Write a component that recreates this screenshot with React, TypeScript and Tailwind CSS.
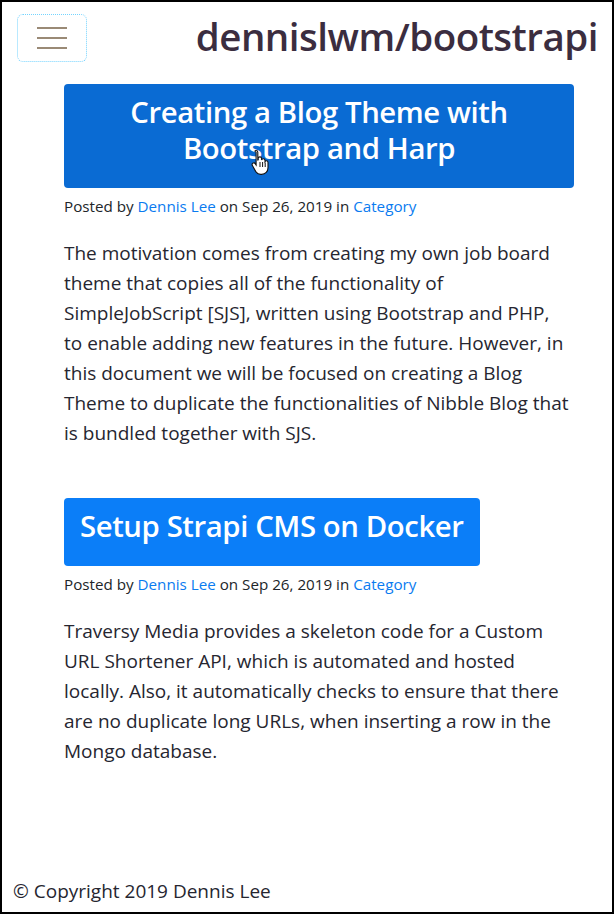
const FONT = "font-['Open_Sans','Noto_Sans',sans-serif]";

function Hamburger() {
  return (
    <button
      type="button"
      className="flex h-[48px] w-[70px] flex-col items-center justify-center gap-[8px] rounded-[6px] border border-dotted border-sky-300 bg-white"
    >
      <span className="h-[2px] w-[30px] bg-[#9a8a76]" />
      <span className="h-[2px] w-[30px] bg-[#9a8a76]" />
      <span className="h-[2px] w-[30px] bg-[#9a8a76]" />
    </button>
  );
}

function Cursor() {
  return (
    <svg
      className="pointer-events-none absolute left-[186px] top-[64px]"
      width="18"
      height="26"
      viewBox="0 0 18 26"
    >
      <path
        d="M5 1.5c1 0 1.8.8 1.8 1.8V11l.4-.1V9.6c0-1 .8-1.7 1.7-1.7s1.7.7 1.7 1.7v1.5c.2-.8.9-1.3 1.7-1.3 1 0 1.7.8 1.7 1.7v1.1c.3-.5.8-.8 1.4-.8.9 0 1.6.8 1.6 1.7v5.3c0 3.7-2.6 6.6-6.3 6.6H9.6c-2.2 0-3.6-1-4.8-2.8L1.4 16.6c-.6-.9-.3-2 .5-2.5.8-.5 1.8-.3 2.3.5l.9 1.3V3.3C3.2 2.3 4 1.5 5 1.5z"
        fill="#fff"
        stroke="#111"
        strokeWidth="1.1"
      />
      <path d="M9 13v5M11.6 13v5M14.2 13.5v4.5" stroke="#111" strokeWidth="1" />
    </svg>
  );
}

function Post({
  title,
  cursor = false,
  full = false,
  children,
}: {
  title: React.ReactNode;
  cursor?: boolean;
  full?: boolean;
  children: React.ReactNode;
}) {
  return (
    <article>
      <div
        className={`relative rounded-[4px] border border-transparent px-[15px] pb-[21px] pt-[9px] text-center text-[29.3px] font-semibold leading-[36px] tracking-[-0.4px] text-white ${
          full ? "block w-full bg-[#0a6bd3]" : "inline-block bg-[#0b7ef8]"
        }`}
      >
        {title}
        {cursor && <Cursor />}
      </div>
      <p className="mt-[6px] text-[15.2px] leading-[24px] text-[#212529]">
        Posted by <a className="text-[#0a7bf0]">Dennis Lee</a> on Sep 26, 2019 in{" "}
        <a className="text-[#0a7bf0]">Category</a>
      </p>
      <p className="mt-[20px] text-[19px] leading-[30px] text-[#262630]">{children}</p>
    </article>
  );
}

export default function App() {
  return (
    <div
      className={`${FONT} flex min-h-[914px] flex-col border-2 border-black bg-white`}
    >
      <header className="flex items-start justify-between pl-[15px] pr-[14px] pt-[12px]">
        <Hamburger />
        <h1 className="-mt-[1px] text-[38.5px] font-semibold leading-[46px] tracking-[-0.5px] text-[#3b2d3f]">
          dennislwm/bootstrapi
        </h1>
      </header>

      <main className="pl-[62px] pr-[38px] pt-[22px]">
        <Post
          full
          cursor
          title={
            <>
              Creating a Blog Theme with
              <br />
              Bootstrap and Harp
            </>
          }
        >
          The motivation comes from creating my own job board
          <br />
          theme that copies all of the functionality of
          <br />
          SimpleJobScript [SJS], written using Bootstrap and PHP,
          <br />
          to enable adding new features in the future. However, in
          <br />
          this document we will be focused on creating a Blog
          <br />
          Theme to duplicate the functionalities of Nibble Blog that
          <br />
          is bundled together with SJS.
        </Post>

        <div className="h-[50px]" />

        <Post title="Setup Strapi CMS on Docker">
          Traversy Media provides a skeleton code for a Custom
          <br />
          URL Shortener API, which is automated and hosted
          <br />
          locally. Also, it automatically checks to ensure that there
          <br />
          are no duplicate long URLs, when inserting a row in the
          <br />
          Mongo database.
        </Post>
      </main>

      <footer className="mt-auto pb-[6px] pl-[11px] text-[19px] leading-[30px] text-[#262630]">
        © Copyright 2019 Dennis Lee
      </footer>
    </div>
  );
}
